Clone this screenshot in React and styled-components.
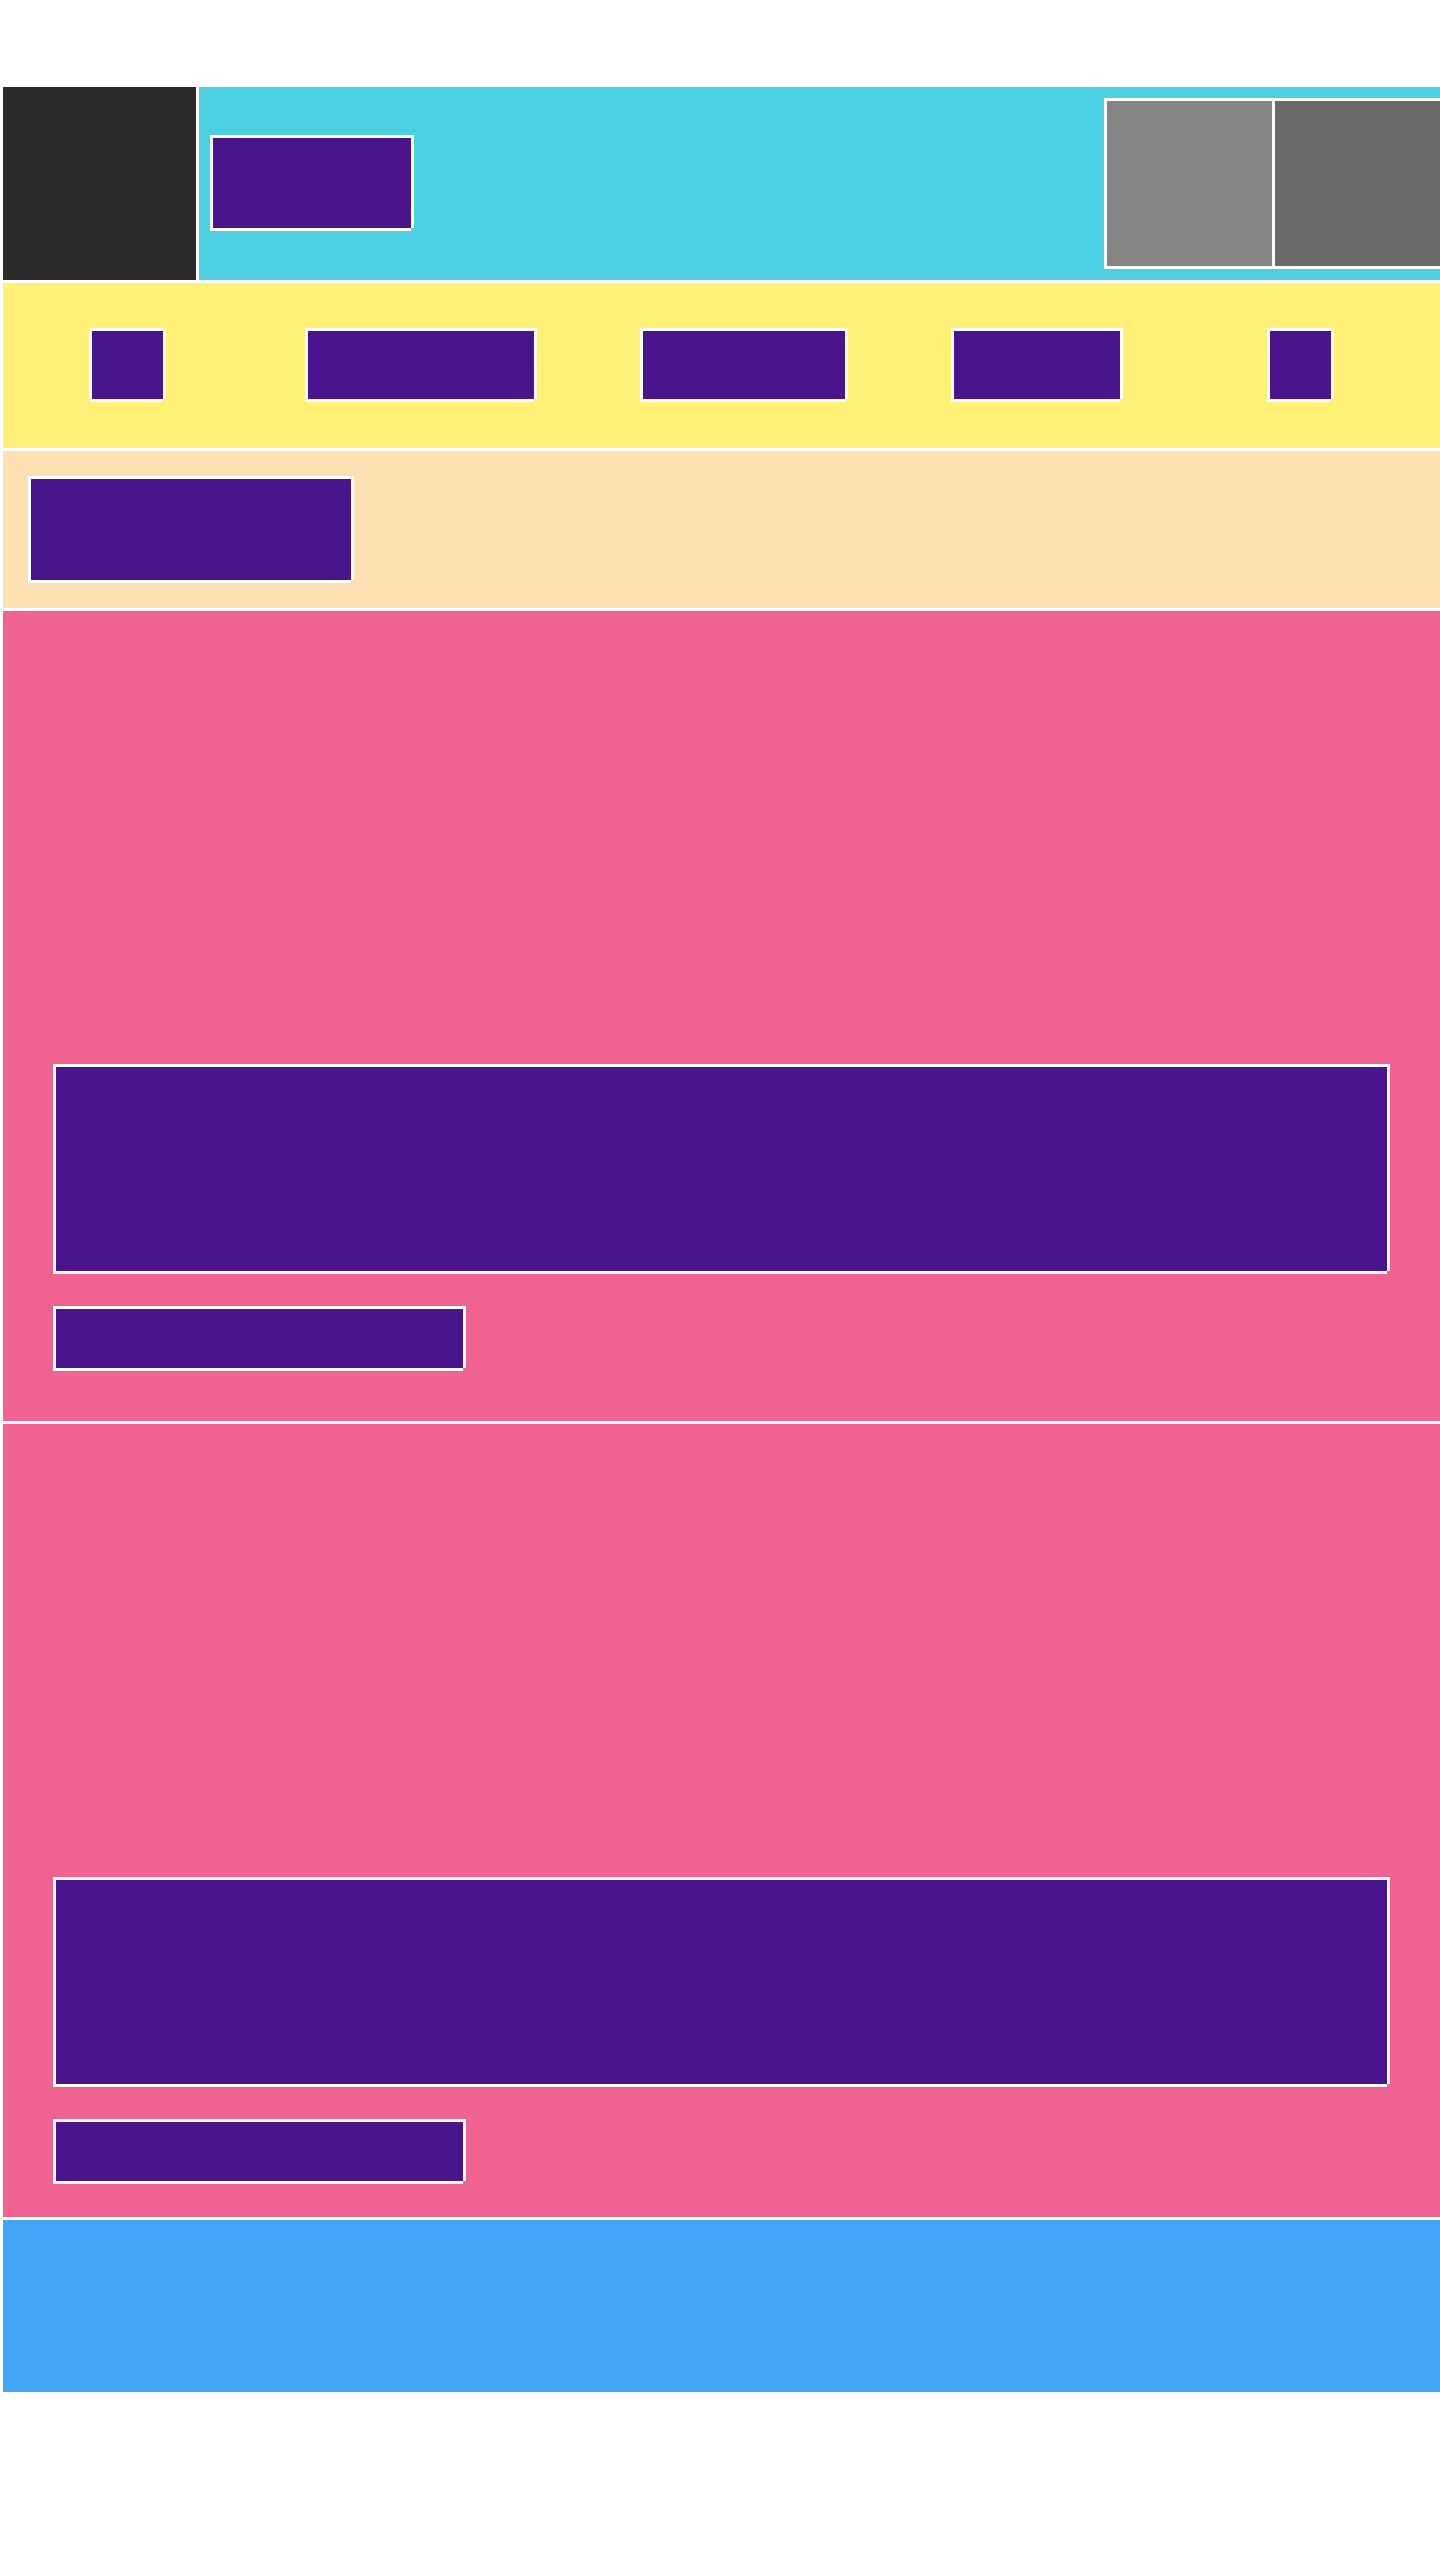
import React from "react";
import styled, { createGlobalStyle } from "styled-components";

const color = {
  line: "#ffffff",
  ink: "#4a148c",
  header: "#4dd0e1",
  tabs: "#fff176",
  filter: "#ffe0b2",
  card: "#f06292",
  footer: "#42a5f5",
  logo: "#2b2b2b",
  actionLight: "#848484",
  actionDark: "#6a6a6a",
};

const GlobalStyle = createGlobalStyle`
  *, *::before, *::after { box-sizing: border-box; }
  body {
    margin: 0;
    background: ${color.line};
    font-family: Roboto, "Liberation Sans", sans-serif;
  }
`;

const Screen = styled.div`
  display: flex;
  flex-direction: column;
  gap: 3px;
  padding: 87px 0 0 3px;
`;

/* Solid text block: white outline, open at the bottom right corner. */
const TextBlock = styled.div`
  width: ${(p) => (p.$width ? `${p.$width}px` : "auto")};
  max-width: 100%;
  height: ${(p) => p.$height}px;
  border: 3px solid ${color.line};
  background: ${color.ink};
  clip-path: polygon(
    0 0,
    100% 0,
    100% calc(100% - 3px),
    calc(100% - 3px) calc(100% - 3px),
    calc(100% - 3px) 100%,
    0 100%
  );
`;

const Header = styled.header`
  display: flex;
  align-items: center;
  background: ${color.header};
`;

const Logo = styled.div`
  flex: none;
  width: 196px;
  height: 193px;
  border-right: 3px solid ${color.line};
  background: ${color.logo};
`;

const Title = styled.div`
  align-self: flex-start;
  padding: 48px 11px;
`;

const Actions = styled.div`
  display: flex;
  margin-left: auto;
`;

const Action = styled.button`
  width: 168px;
  height: 171px;
  padding: 0;
  border: 3px solid ${color.line};
  border-right: 0;
  border-radius: 0;
  background: ${(p) => p.$tone};
`;

const Tabs = styled.nav`
  display: flex;
  gap: 103px;
  padding: 45px 0 46px 50px;
  overflow: hidden;
  background: ${color.tabs};
`;

const Tab = styled.button`
  display: flex;
  flex: none;
  justify-content: center;
  min-width: 149px;
  padding: 0;
  border: 0;
  background: none;
`;

const FilterBar = styled.section`
  padding: 25px;
  background: ${color.filter};
`;

const Feed = styled.main`
  display: flex;
  flex-direction: column;
  gap: 3px;
`;

const Card = styled.article`
  display: flex;
  flex-direction: column;
  gap: 32px;
  padding: 453px 50px 50px;
  background: ${color.card};

  &:last-child {
    padding-bottom: 33px;
  }
`;

const Footer = styled.footer`
  height: 172px;
  background: ${color.footer};
`;

const tabWidths = [77, 232, 208, 172, 67];
const cards = ["first", "second"];

export default function App() {
  return (
    <>
      <GlobalStyle />
      <Screen>
        <Header>
          <Logo />
          <Title>
            <TextBlock $width={204} $height={96} />
          </Title>
          <Actions>
            <Action type="button" aria-label="Search" $tone={color.actionLight} />
            <Action type="button" aria-label="More" $tone={color.actionDark} />
          </Actions>
        </Header>
        <Tabs>
          {tabWidths.map((width, i) => (
            <Tab type="button" key={width} aria-label={`Tab ${i + 1}`}>
              <TextBlock as="span" $width={width} $height={74} />
            </Tab>
          ))}
        </Tabs>
        <FilterBar>
          <TextBlock $width={326} $height={107} />
        </FilterBar>
        <Feed>
          {cards.map((id) => (
            <Card key={id}>
              <TextBlock $height={210} />
              <TextBlock $width={413} $height={65} />
            </Card>
          ))}
        </Feed>
        <Footer />
      </Screen>
    </>
  );
}
